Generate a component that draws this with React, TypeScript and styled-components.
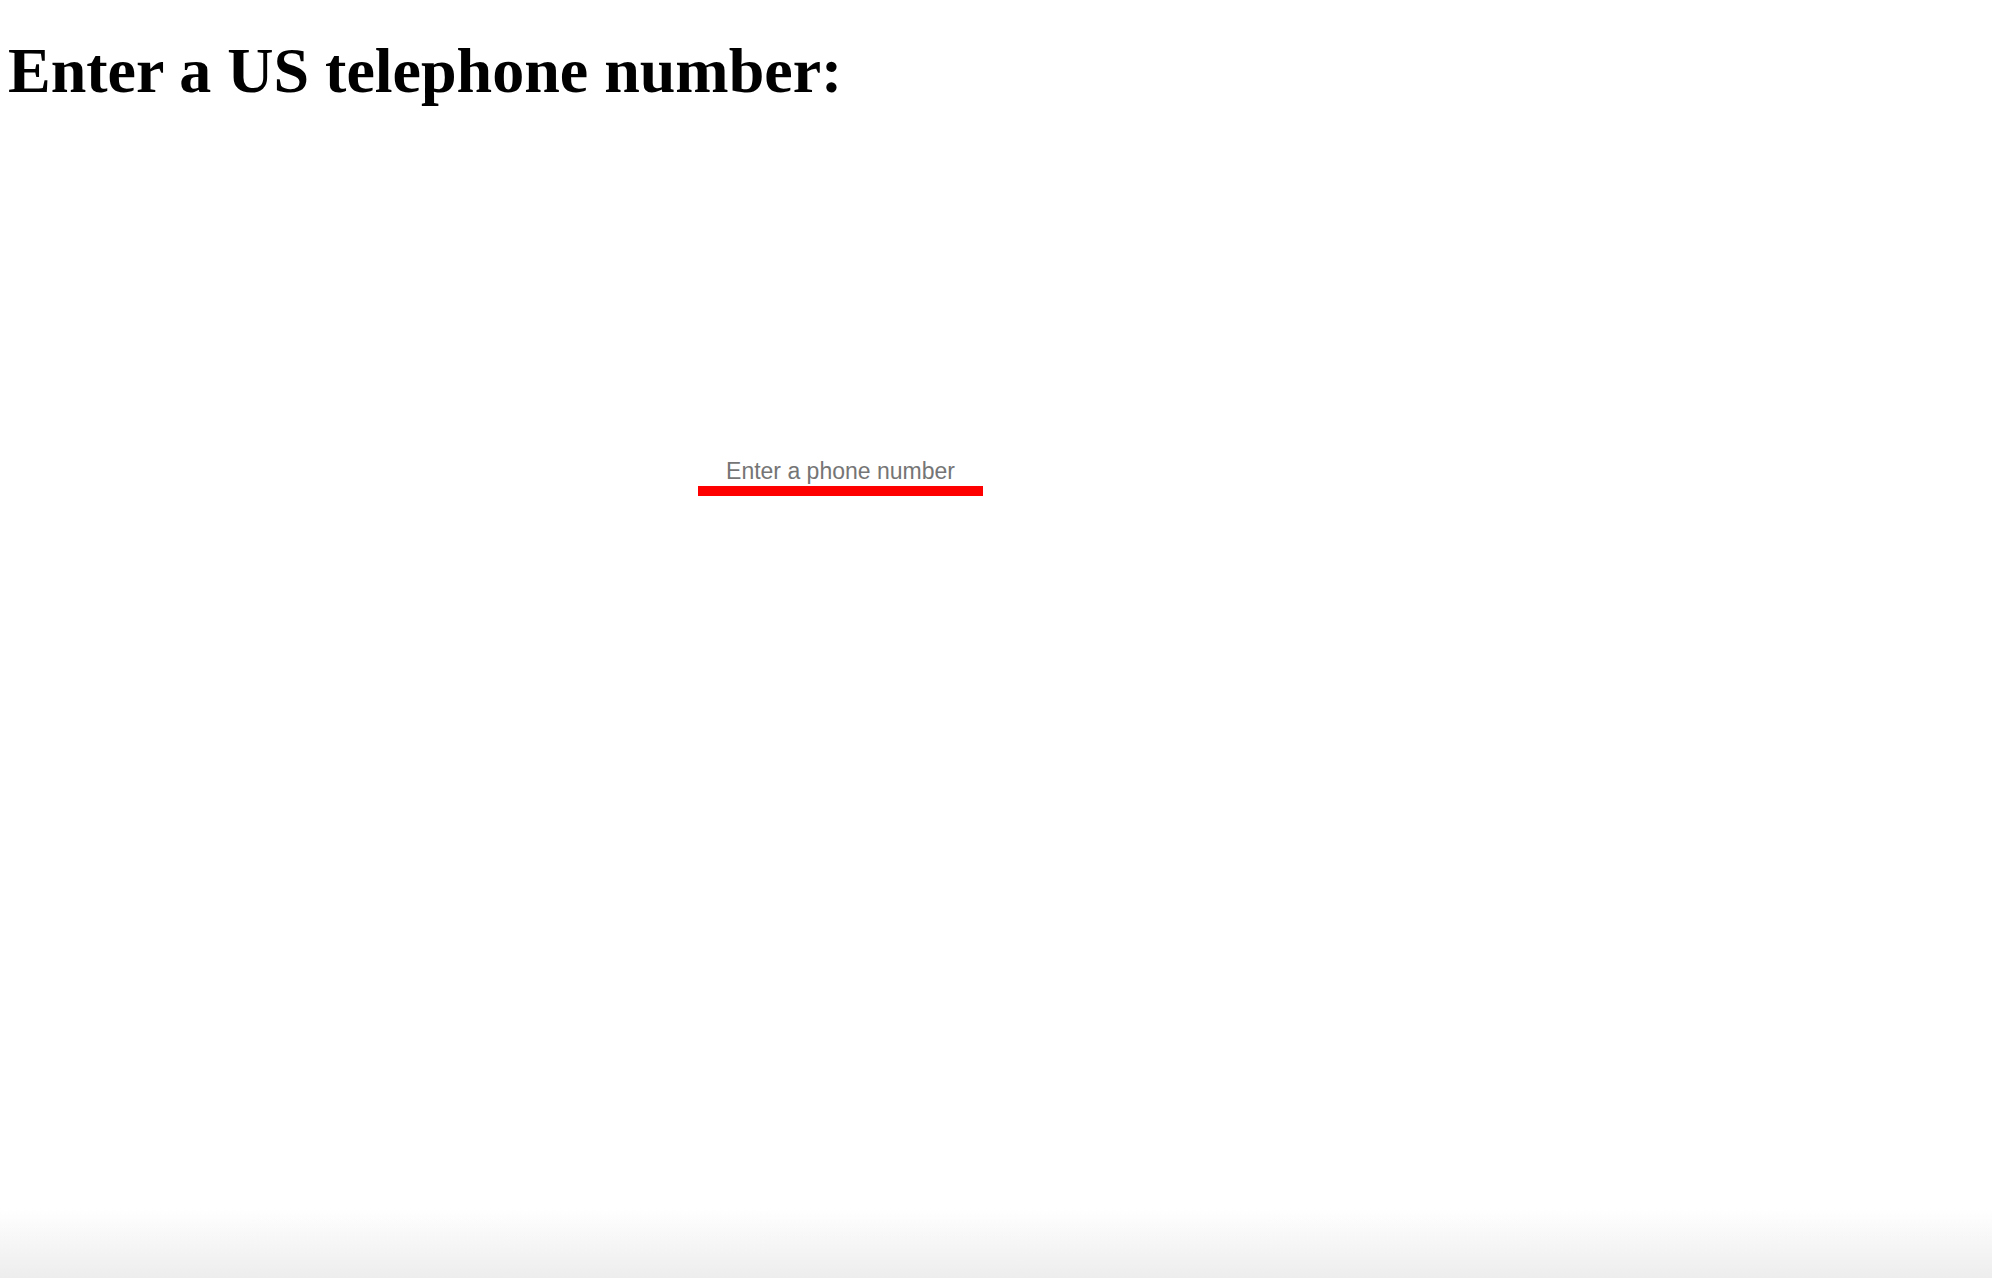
import styled, { createGlobalStyle } from "styled-components";

const Global = createGlobalStyle`
  html, body {
    margin: 0;
    padding: 0;
    background: #ffffff;
  }
`;

const Page = styled.div`
  min-height: 100vh;
  display: flex;
  flex-direction: column;
`;

const Title = styled.h1`
  margin: 0;
  padding: 34px 0 0 8px;
  font-family: "Liberation Serif", "Times New Roman", serif;
  font-size: 64px;
  font-weight: bold;
  line-height: 74px;
  color: #000;
`;

const Field = styled.div`
  padding: 348px 0 0 698px;
  flex: 1;
`;

const PhoneInput = styled.input`
  display: block;
  box-sizing: border-box;
  width: 285px;
  height: 40px;
  padding: 0;
  border: none;
  border-bottom: 10px solid #ff0000;
  outline: none;
  background: transparent;
  font-family: "Liberation Sans", Arial, sans-serif;
  font-size: 23px;
  text-align: center;
  color: #000;

  &::placeholder {
    color: #757575;
  }
`;

const BottomFade = styled.div`
  height: 70px;
  background: linear-gradient(to bottom, rgba(238, 238, 238, 0) 0%, #ededed 100%);
`;

const App = () => {
  return (
    <Page>
      <Global />
      <Title>Enter a US telephone number:</Title>
      <Field>
        <PhoneInput type="tel" placeholder="Enter a phone number" />
      </Field>
      <BottomFade />
    </Page>
  );
};

export default App;
